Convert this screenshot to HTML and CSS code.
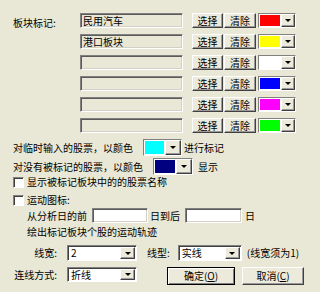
FILE: index.html
```html
<!DOCTYPE html>
<html lang="zh">
<head>
<meta charset="utf-8">
<link rel="stylesheet" href="styles.css">
</head>
<body>
<div class="dlg">
  <div class="mark-list">
    <div class="mark-row">
      <span class="mark-label">板块标记:</span>
      <div class="edit ro">民用汽车</div>
      <div class="btn sel">选择</div><div class="btn clr">清除</div>
      <div class="ccombo"><span class="sw" style="background:#ff0000"></span><span class="dd"><i class="tri"></i></span></div>
    </div>
    <div class="mark-row">
      <span class="mark-label"></span>
      <div class="edit ro">港口板块</div>
      <div class="btn sel">选择</div><div class="btn clr">清除</div>
      <div class="ccombo"><span class="sw" style="background:#ffff00"></span><span class="dd"><i class="tri"></i></span></div>
    </div>
    <div class="mark-row">
      <span class="mark-label"></span>
      <div class="edit ro"></div>
      <div class="btn sel">选择</div><div class="btn clr">清除</div>
      <div class="ccombo"><span class="sw" style="background:#ffffff"></span><span class="dd"><i class="tri"></i></span></div>
    </div>
    <div class="mark-row">
      <span class="mark-label"></span>
      <div class="edit ro"></div>
      <div class="btn sel">选择</div><div class="btn clr">清除</div>
      <div class="ccombo"><span class="sw" style="background:#0000ff"></span><span class="dd"><i class="tri"></i></span></div>
    </div>
    <div class="mark-row">
      <span class="mark-label"></span>
      <div class="edit ro"></div>
      <div class="btn sel">选择</div><div class="btn clr">清除</div>
      <div class="ccombo"><span class="sw" style="background:#ff00ff"></span><span class="dd"><i class="tri"></i></span></div>
    </div>
    <div class="mark-row">
      <span class="mark-label"></span>
      <div class="edit ro"></div>
      <div class="btn sel">选择</div><div class="btn clr">清除</div>
      <div class="ccombo"><span class="sw" style="background:#00ff00"></span><span class="dd"><i class="tri"></i></span></div>
    </div>
  </div>

  <div class="crow temp">
    <span>对临时输入的股票，以颜色</span>
    <div class="ccombo big c1"><span class="sw" style="background:#00ffff"></span><span class="dd"><i class="tri"></i></span></div>
    <span class="after1">进行标记</span>
  </div>
  <div class="crow unmarked">
    <span>对没有被标记的股票，以颜色</span>
    <div class="ccombo big c2"><span class="sw" style="background:#000080"></span><span class="dd"><i class="tri"></i></span></div>
    <span class="after2">显示</span>
  </div>

  <div class="chk-row first"><span class="chk"></span><span>显示被标记板块中的的股票名称</span></div>
  <div class="chk-row"><span class="chk"></span><span>运动图标:</span></div>

  <div class="days-row">
    <span>从分析日的前</span>
    <div class="edit wh d1"></div>
    <span class="lbl-mid">日到后</span>
    <div class="edit wh d2"></div>
    <span class="lbl-end">日</span>
  </div>
  <div class="track-row">绘出标记板块个股的运动轨迹</div>

  <div class="line-row">
    <span class="flabel">线宽:</span>
    <div class="combo w1"><span class="cv">2</span><span class="dd"><i class="tri"></i></span></div>
    <span class="lt">线型:</span>
    <div class="combo w2"><span class="cv">实线</span><span class="dd"><i class="tri"></i></span></div>
    <span class="note">(线宽须为1)</span>
  </div>
  <div class="last-row">
    <span class="flabel">连线方式:</span>
    <div class="combo w1"><span class="cv">折线</span><span class="dd"><i class="tri"></i></span></div>
    <div class="btn big-btn ok">确定(<u>O</u>)</div>
    <div class="btn big-btn cancel">取消(<u>C</u>)</div>
  </div>
</div>
</body>
</html>
```

FILE: styles.css
```css
html, body {
  margin: 0;
  padding: 0;
}
body {
  width: 320px;
  height: 292px;
  overflow: hidden;
  background: #e9e7d5;
  font-family: "Noto Sans CJK SC", "Noto Sans", sans-serif;
  font-size: 10px;
  line-height: 12px;
  color: #000;
  white-space: nowrap;
}
.dlg {
  padding: 13px 0 0 13px;
}
.mark-list {
  display: flex;
  flex-direction: column;
  gap: 6px;
}
.mark-row {
  display: flex;
  align-items: center;
  height: 15px;
}
.mark-label {
  width: 67px;
  flex: none;
  position: relative;
  top: 2px;
}
.edit {
  box-sizing: border-box;
  height: 15px;
  border-top: 1px solid #808080;
  border-left: 1px solid #808080;
  border-bottom: 1px solid #ffffff;
  border-right: 1px solid #ffffff;
  box-shadow: inset 1px 1px 0 #5a5a5a, inset -1px -1px 0 #d4d0c8;
  padding: 1px 0 0 2px;
  flex: none;
}
.edit.ro {
  width: 103px;
  background: #e9e7d5;
}
.edit.wh {
  background: #fff;
}
.btn {
  box-sizing: border-box;
  height: 15px;
  background: #eceadb;
  border-top: 1px solid #ffffff;
  border-left: 1px solid #ffffff;
  border-bottom: 1px solid #404040;
  border-right: 1px solid #404040;
  box-shadow: inset -1px -1px 0 #9a9a9a;
  display: flex;
  align-items: center;
  justify-content: center;
  flex: none;
}
.btn.sel {
  margin-left: 9px;
  width: 31px;
}
.btn.clr {
  margin-left: 1px;
  width: 32px;
}
.ccombo {
  box-sizing: border-box;
  margin-left: 2px;
  width: 38px;
  height: 15px;
  display: flex;
  border-top: 1px solid #808080;
  border-left: 1px solid #808080;
  border-bottom: 1px solid #ffffff;
  border-right: 1px solid #ffffff;
  background: #fff;
  flex: none;
}
.ccombo .sw {
  flex: 1;
  margin: 1px;
}
.dd {
  box-sizing: border-box;
  width: 14px;
  background: #eceadb;
  border-top: 1px solid #ffffff;
  border-left: 1px solid #ffffff;
  border-bottom: 1px solid #404040;
  border-right: 1px solid #404040;
  box-shadow: inset -1px -1px 0 #9a9a9a;
  display: flex;
  align-items: center;
  justify-content: center;
  flex: none;
}
.tri {
  width: 0;
  height: 0;
  border-left: 3px solid transparent;
  border-right: 3px solid transparent;
  border-top: 3px solid #000;
}
.crow {
  display: flex;
  align-items: center;
  height: 17px;
}
.crow.temp {
  margin-top: 6px;
}
.crow.unmarked {
  margin-top: 2px;
}
.ccombo.big {
  height: 17px;
  margin-left: 10px;
}
.ccombo.c1 {
  width: 39px;
}
.ccombo.c2 {
  width: 40px;
}
.ccombo.big .dd {
  width: 16px;
}
.after1 {
  margin-left: 2px;
}
.after2 {
  margin-left: 5px;
}
.chk-row {
  display: flex;
  align-items: center;
  height: 14px;
  margin-top: 4px;
}
.chk-row.first {
  margin-top: 0;
}
.chk {
  box-sizing: border-box;
  width: 11px;
  height: 11px;
  background: #fff;
  border-top: 1px solid #808080;
  border-left: 1px solid #808080;
  border-bottom: 1px solid #ffffff;
  border-right: 1px solid #ffffff;
  box-shadow: inset 1px 1px 0 #404040;
  margin-right: 3px;
  flex: none;
}
.days-row {
  display: flex;
  align-items: center;
  height: 15px;
  margin-top: 1px;
  padding-left: 14px;
}
.edit.d1 {
  margin-left: 5px;
  width: 56px;
}
.lbl-mid {
  margin-left: 2px;
}
.edit.d2 {
  margin-left: 5px;
  width: 57px;
}
.lbl-end {
  margin-left: 3px;
}
.track-row {
  margin-top: 3px;
  height: 12px;
  padding-left: 14px;
}
.line-row {
  display: flex;
  align-items: center;
  height: 16px;
  margin-top: 7px;
}
.flabel {
  width: 44px;
  text-align: right;
  flex: none;
}
.combo {
  box-sizing: border-box;
  height: 16px;
  display: flex;
  background: #fff;
  border-top: 1px solid #808080;
  border-left: 1px solid #808080;
  border-bottom: 1px solid #ffffff;
  border-right: 1px solid #ffffff;
  box-shadow: inset 1px 1px 0 #404040;
  flex: none;
}
.combo .cv {
  flex: 1;
  padding: 1px 0 0 3px;
}
.combo .dd {
  width: 15px;
  margin: 1px 1px 1px 0;
}
.combo.w1 {
  margin-left: 10px;
  width: 70px;
}
.lt {
  margin-left: 10px;
}
.combo.w2 {
  margin-left: 8px;
  width: 64px;
}
.note {
  margin-left: 5px;
}
.last-row {
  display: flex;
  align-items: flex-start;
  margin-top: 6px;
}
.last-row .flabel {
  margin-top: 2px;
  margin-left: -1px;
  width: 45px;
}
.last-row .combo {
  height: 15px;
}
.big-btn {
  height: 18px;
}
.btn.ok {
  margin-left: 30px;
  width: 68px;
  border: 1px solid #000;
  box-shadow: inset 1px 1px 0 #ffffff, inset -1px -1px 0 #808080;
}
.btn.cancel {
  margin-left: 7px;
  width: 62px;
}
u {
  text-decoration: underline;
}
```
